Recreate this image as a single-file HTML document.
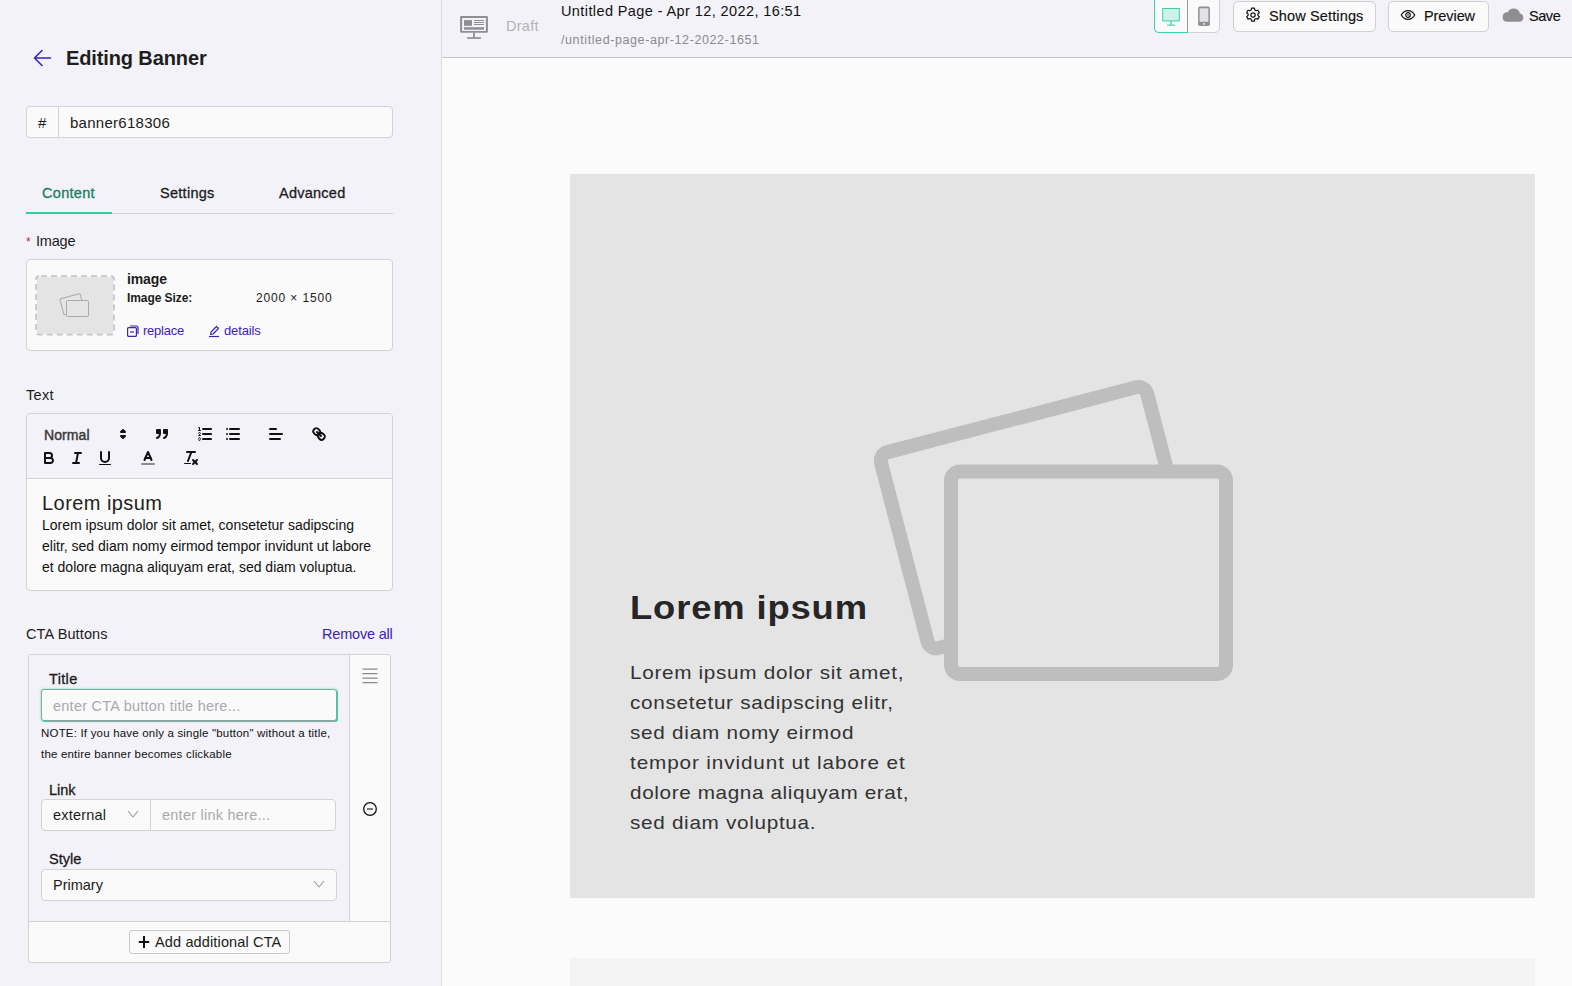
<!DOCTYPE html>
<html><head><meta charset="utf-8">
<style>
*{box-sizing:border-box;margin:0;padding:0}
html,body{width:1572px;height:986px;overflow:hidden;background:#fbfbfb;font-family:"Liberation Sans",sans-serif;color:#1c1c1c}
.a{position:absolute}
.t{position:absolute;white-space:nowrap;line-height:1}
#side{position:absolute;left:0;top:0;width:442px;height:986px;background:#f3f2f8;border-right:1px solid #dcdbe3}
#top{position:absolute;left:442px;top:0;width:1130px;height:58px;background:#f3f2f8;border-bottom:1px solid #c5c5ce}
.box{position:absolute;background:#fafafa;border:1px solid #d3d3d6;border-radius:4px}
.ql{position:absolute;width:18px;height:18px;overflow:visible}
.ql .s{fill:none;stroke:#111;stroke-width:2;stroke-linecap:round;stroke-linejoin:round}
.ql .f{fill:#111}
.m{-webkit-text-stroke:0.3px currentColor}
</style></head><body>

<div id="side">
  <!-- back arrow -->
  <svg class="a" style="left:32px;top:48px" width="20" height="20" viewBox="0 0 20 20">
    <path d="M18.5 10H3 M10 2.5L2.5 10L10 17.5" fill="none" stroke="#3d22b6" stroke-width="1.6" stroke-linecap="round" stroke-linejoin="round"/>
  </svg>
  <div class="t" style="left:66px;top:48px;font-size:20px;font-weight:bold;letter-spacing:-0.12px;color:#1e1e1e">Editing Banner</div>

  <!-- id input -->
  <div class="box" style="left:26px;top:106px;width:367px;height:32px"></div>
  <div class="a" style="left:58px;top:107px;width:1px;height:30px;background:#d3d3d6"></div>
  <div class="t" style="left:38px;top:115px;font-size:15px">#</div>
  <div class="t" style="left:70px;top:115px;font-size:15px;letter-spacing:0.27px">banner618306</div>

  <!-- tabs -->
  <div class="a" style="left:26px;top:213px;width:367px;height:1px;background:#cfcfd4"></div>
  <div class="a" style="left:26px;top:212px;width:86px;height:2px;background:#2ccf9e"></div>
  <div class="t m" style="left:42px;top:186px;font-size:14.5px;letter-spacing:0.3px;color:#1b7d62">Content</div>
  <div class="t m" style="left:160px;top:186px;font-size:14.5px;letter-spacing:0.28px">Settings</div>
  <div class="t m" style="left:279px;top:186px;font-size:14.5px;letter-spacing:0.25px">Advanced</div>

  <!-- image label -->
  <div class="t" style="left:26px;top:236px;font-size:12px;color:#d0233a">*</div>
  <div class="t" style="left:36px;top:234px;font-size:14.5px;letter-spacing:-0.2px">Image</div>

  <!-- image card -->
  <div class="box" style="left:26px;top:259px;width:367px;height:92px"></div>
  <svg class="a" style="left:34px;top:274px" width="82" height="63" viewBox="34 274 82 63"><rect x="36.9" y="277.1" width="76.2" height="56.8" fill="#e4e4e4"/><rect x="36" y="276.1" width="78" height="58.6" rx="3" fill="none" stroke="#c6c6cc" stroke-width="1.8" stroke-dasharray="6 4" stroke-dashoffset="-2"/></svg>
  <svg class="a" style="left:35px;top:275px" width="80" height="61" viewBox="35 275 80 61">
    <g fill="none" stroke="#ababab" stroke-width="1">
      <rect x="61.5" y="296" width="21" height="16.5" rx="1" transform="rotate(-15 72 304.2)"/>
      <rect x="66.5" y="300.5" width="22" height="16" rx="1" fill="#e4e4e4"/>
    </g>
  </svg>
  <div class="t" style="left:127px;top:272px;font-size:14px;font-weight:bold;letter-spacing:-0.12px">image</div>
  <div class="t" style="left:127px;top:292px;font-size:12px;font-weight:bold;letter-spacing:-0.07px">Image Size:</div>
  <div class="t" style="left:256px;top:292px;font-size:12px;letter-spacing:0.86px">2000 × 1500</div>
  <svg class="a" style="left:126px;top:324px" width="14" height="14" viewBox="0 0 14 14">
    <g fill="none" stroke="#3d22b6" stroke-width="1.2">
      <rect x="1.6" y="3.6" width="8.8" height="8.8" rx="1"/>
      <path d="M4 2h6.5A1.5 1.5 0 0 1 12 3.5V10"/>
      <path d="M4 8h4"/>
    </g>
  </svg>
  <div class="t" style="left:143px;top:324px;font-size:13px;letter-spacing:-0.23px;color:#3d22b6">replace</div>
  <svg class="a" style="left:207px;top:324px" width="14" height="14" viewBox="0 0 14 14">
    <g fill="none" stroke="#3d22b6" stroke-width="1.2" stroke-linejoin="round">
      <path d="M3.5 10.5L4 8L9.5 2.5L11.5 4.5L6 10Z"/>
      <path d="M2 12.5H12"/>
    </g>
  </svg>
  <div class="t" style="left:224px;top:324px;font-size:13px;letter-spacing:-0.12px;color:#3d22b6">details</div>

  <!-- Text label -->
  <div class="t" style="left:26px;top:388px;font-size:14.5px;letter-spacing:0.3px">Text</div>

  <!-- editor -->
  <div class="a" style="left:26px;top:413px;width:367px;height:178px;background:#fafafa;border:1px solid #d3d3d6;border-radius:4px;overflow:hidden">
    <div class="a" style="left:0;top:0;width:365px;height:65px;background:#f3f2f8;border-bottom:1px solid #d3d3d6"></div>
  </div>
  <div class="t m" style="left:44px;top:428px;font-size:14px;color:#3a3a3a;-webkit-text-stroke:0.45px #3a3a3a;letter-spacing:0.1px">Normal</div>
  <!-- picker arrows -->
  <svg class="ql" style="left:114px;top:425px" viewBox="0 0 18 18"><polygon class="s" style="fill:#111" points="7 11 9 13 11 11 7 11"/><polygon class="s" style="fill:#111" points="7 7 9 5 11 7 7 7"/></svg>
  <!-- blockquote -->
  <svg class="ql" style="left:153px;top:425px" viewBox="0 0 18 18"><rect class="s f" height="3" width="3" x="4" y="5"/><rect class="s f" height="3" width="3" x="11" y="5"/><path class="s" d="M7,8c0,4.031-3,5-3,5"/><path class="s" d="M14,8c0,4.031-3,5-3,5"/></svg>
  <!-- ordered list -->
  <svg class="ql" style="left:196px;top:425px" viewBox="0 0 18 18"><line class="s" x1="7" x2="15" y1="4" y2="4"/><line class="s" x1="7" x2="15" y1="9" y2="9"/><line class="s" x1="7" x2="15" y1="14" y2="14"/><line class="s" style="stroke-width:1" x1="2.5" x2="4.5" y1="5.5" y2="5.5"/><path class="f" d="M3.5,6A0.5,0.5,0,0,1,3,5.5V3.085l-0.276.138A0.5,0.5,0,0,1,2.053,3c-0.124-.247-0.023-0.324.224-0.447l1-.5A0.5,0.5,0,0,1,4,2.5v3A0.5,0.5,0,0,1,3.5,6Z"/><path class="s" style="stroke-width:1" d="M4.5,10.5h-2c0-.234,1.85-1.076,1.85-2.234A0.959,0.959,0,0,0,2.5,8.156"/><path class="s" style="stroke-width:1" d="M2.5,14.846a0.959,0.959,0,0,0,1.85-.109A0.7,0.7,0,0,0,3.75,14a0.688,0.688,0,0,0,.6-0.736,0.959,0.959,0,0,0-1.85-.109"/></svg>
  <!-- bullet list -->
  <svg class="ql" style="left:224px;top:425px" viewBox="0 0 18 18"><line class="s" x1="6" x2="15" y1="4" y2="4"/><line class="s" x1="6" x2="15" y1="9" y2="9"/><line class="s" x1="6" x2="15" y1="14" y2="14"/><line class="s" x1="3" x2="3" y1="4" y2="4"/><line class="s" x1="3" x2="3" y1="9" y2="9"/><line class="s" x1="3" x2="3" y1="14" y2="14"/></svg>
  <!-- align -->
  <svg class="ql" style="left:267px;top:425px" viewBox="0 0 18 18"><line class="s" x1="3" x2="15" y1="9" y2="9"/><line class="s" x1="3" x2="13" y1="14" y2="14"/><line class="s" x1="3" x2="9" y1="4" y2="4"/></svg>
  <!-- link -->
  <svg class="ql" style="left:310px;top:425px" viewBox="0 0 18 18"><line class="s" x1="7" x2="11" y1="7" y2="11"/><path class="s" d="M8.9,4.577a3.476,3.476,0,0,1,.36,4.679A3.476,3.476,0,0,1,4.577,8.9C3.185,7.5,2.035,6.4,4.217,4.217S7.5,3.185,8.9,4.577Z"/><path class="s" d="M13.423,9.1a3.476,3.476,0,0,0-4.679-.36,3.476,3.476,0,0,0,.36,4.679c1.392,1.392,2.5,2.542,4.679.36S14.815,10.5,13.423,9.1Z"/></svg>
  <!-- bold -->
  <svg class="ql" style="left:40px;top:449px" viewBox="0 0 18 18"><path class="s" d="M5,4H9.5A2.5,2.5,0,0,1,12,6.5v0A2.5,2.5,0,0,1,9.5,9H5A0,0,0,0,1,5,9V4A0,0,0,0,1,5,4Z"/><path class="s" d="M5,9h5.5A2.5,2.5,0,0,1,13,11.5v0A2.5,2.5,0,0,1,10.5,14H5a0,0,0,0,1,0,0V9A0,0,0,0,1,5,9Z"/></svg>
  <!-- italic -->
  <svg class="ql" style="left:68px;top:449px" viewBox="0 0 18 18"><line class="s" x1="7" x2="13" y1="4" y2="4"/><line class="s" x1="5" x2="11" y1="14" y2="14"/><line class="s" x1="8" x2="10" y1="14" y2="4"/></svg>
  <!-- underline -->
  <svg class="ql" style="left:96px;top:449px" viewBox="0 0 18 18"><path class="s" d="M5,3V9a4.012,4.012,0,0,0,4,4H9a4.012,4.012,0,0,0,4-4V3"/><rect class="f" height="1" rx="0.5" ry="0.5" width="12" x="3" y="15"/></svg>
  <!-- color -->
  <svg class="ql" style="left:139px;top:449px" viewBox="0 0 18 18"><line class="s" style="stroke:#8a8a8a" x1="3" x2="15" y1="15" y2="15"/><polyline class="s" points="5.5 11 9 3 12.5 11"/><line class="s" x1="11.63" x2="6.38" y1="9" y2="9"/></svg>
  <!-- clean -->
  <svg class="ql" style="left:182px;top:449px" viewBox="0 0 18 18"><line class="s" x1="5" x2="13" y1="3" y2="3"/><line class="s" x1="6" x2="9.35" y1="12" y2="3"/><line class="s" x1="11" x2="15" y1="11" y2="15"/><line class="s" x1="15" x2="11" y1="11" y2="15"/><rect class="f" width="7" height="1" rx="0.5" ry="0.5" x="2" y="14"/></svg>

  <div class="t" style="left:42px;top:493px;font-size:20px;letter-spacing:0.44px;color:#222">Lorem ipsum</div>
  <div class="a" style="left:42px;top:515px;font-size:14px;line-height:21px;color:#111;white-space:nowrap">Lorem ipsum dolor sit amet, consetetur sadipscing<br>elitr, sed diam nomy eirmod tempor invidunt ut labore<br>et dolore magna aliquyam erat, sed diam voluptua.</div>

  <!-- CTA -->
  <div class="t" style="left:26px;top:627px;font-size:14.5px;letter-spacing:0.12px">CTA Buttons</div>
  <div class="t" style="left:322px;top:627px;font-size:14.5px;letter-spacing:-0.19px;color:#3d22b6">Remove all</div>

  <div class="a" style="left:28px;top:654px;width:363px;height:309px;background:#fafafa;border:1px solid #d3d3d6;border-radius:3px;overflow:hidden">
    <div class="a" style="left:0;top:0;width:321px;height:267px;background:#f3f2f8;border-right:1px solid #d3d3d6;border-bottom:1px solid #d3d3d6"></div>
    <div class="a" style="left:321px;top:0;width:40px;height:267px;border-bottom:1px solid #d3d3d6"></div>
  </div>
  <div class="t m" style="left:49px;top:672px;font-size:14.5px;letter-spacing:0.34px">Title</div>
  <div class="a" style="left:41px;top:689px;width:296px;height:32px;background:#fafafa;border:1px solid #86a89e;border-radius:3px;box-shadow:1px 1px 0 0 #2ed7a9,0 0 1.5px 1px rgba(60,220,180,0.35)"></div>
  <div class="t" style="left:53px;top:699px;font-size:14.5px;letter-spacing:0.24px;color:#a9a9ad">enter CTA button title here...</div>
  <div class="a" style="left:41px;top:723px;font-size:11.5px;line-height:20.75px;letter-spacing:0.19px;color:#111;white-space:nowrap">NOTE: If you have only a single "button" without a title,<br>the entire banner becomes clickable</div>

  <!-- hamburger -->
  <svg class="a" style="left:360px;top:665px" width="20" height="22" viewBox="0 0 20 22"><g stroke="#8a8a8e" stroke-width="1.2"><path d="M2.5 4.2H17.5M2.5 8.7H17.5M2.5 13.2H17.5M2.5 17.7H17.5"/></g></svg>
  <!-- minus circle -->
  <svg class="a" style="left:360px;top:799px" width="20" height="20" viewBox="0 0 20 20"><circle cx="10" cy="10" r="6.3" fill="none" stroke="#111" stroke-width="1.3"/><path d="M7 10H13" stroke="#555" stroke-width="1.5"/></svg>

  <div class="t m" style="left:49px;top:783px;font-size:14.5px">Link</div>
  <div class="box" style="left:41px;top:799px;width:295px;height:32px"></div>
  <div class="a" style="left:150px;top:800px;width:1px;height:30px;background:#d3d3d6"></div>
  <div class="t" style="left:53px;top:808px;font-size:14.5px;letter-spacing:0.2px">external</div>
  <svg class="a" style="left:126px;top:808px" width="14" height="12" viewBox="0 0 14 12"><path d="M2 3L7 9L12 3" fill="none" stroke="#9a9a9e" stroke-width="1.1"/></svg>
  <div class="t" style="left:162px;top:808px;font-size:14.5px;letter-spacing:0.24px;color:#a9a9ad">enter link here...</div>

  <div class="t m" style="left:49px;top:852px;font-size:14.5px">Style</div>
  <div class="box" style="left:41px;top:869px;width:296px;height:32px"></div>
  <div class="t" style="left:53px;top:878px;font-size:14.5px">Primary</div>
  <svg class="a" style="left:312px;top:878px" width="14" height="12" viewBox="0 0 14 12"><path d="M2 3L7 9L12 3" fill="none" stroke="#9a9a9e" stroke-width="1.1"/></svg>

  <!-- add CTA button -->
  <div class="box" style="left:129px;top:930px;width:161px;height:24px;border-radius:3px;border-color:#c9c9cd"></div>
  <svg class="a" style="left:137px;top:934px" width="14" height="16" viewBox="0 0 14 16"><path d="M7 2V14M1.8 8H12.2" stroke="#111" stroke-width="2"/></svg>
  <div class="t" style="left:155px;top:935px;font-size:14.5px;letter-spacing:0.14px">Add additional CTA</div>
</div>

<div id="top"></div>
<!-- page monitor icon -->
<svg class="a" style="left:459px;top:15px" width="30" height="25" viewBox="459 15 30 25">
  <g fill="#8e8e93">
    <path fill-rule="evenodd" d="M461.1 16H486.9A1 1 0 0 1 487.9 17V31.7A1 1 0 0 1 486.9 32.7H461.1A1 1 0 0 1 460.1 31.7V17A1 1 0 0 1 461.1 16ZM462.1 17.9V31.1H485.9V17.9Z"/>
    <rect x="464" y="20.1" width="8" height="5.7"/>
    <rect x="474" y="20" width="10" height="1"/>
    <rect x="474" y="22" width="10" height="1"/>
    <rect x="474" y="24" width="10" height="1"/>
    <rect x="464" y="27.2" width="20" height="2.5"/>
    <rect x="473.1" y="32.5" width="1.8" height="5"/>
    <rect x="467.1" y="37.2" width="13.8" height="1.7"/>
  </g>
</svg>
<div class="t" style="left:506px;top:19px;font-size:14.5px;letter-spacing:0.27px;color:#b3b3b7">Draft</div>
<div class="t" style="left:561px;top:4px;font-size:14.5px;letter-spacing:0.4px;color:#111">Untitled Page - Apr 12, 2022, 16:51</div>
<div class="t" style="left:561px;top:34px;font-size:12.5px;letter-spacing:0.6px;color:#8a8a8e">/untitled-page-apr-12-2022-1651</div>

<!-- device toggle -->
<div class="a" style="left:1154px;top:-5px;width:66px;height:38px;background:#fafafa;border:1px solid #cfcfd4;border-radius:5px"></div>
<div class="a" style="left:1154px;top:-5px;width:34px;height:38px;border:1px solid #3ad0aa;border-right:none;border-radius:5px 0 0 5px"></div>
<div class="a" style="left:1187px;top:0;width:1px;height:32px;background:#9a9a9e"></div>
<svg class="a" style="left:1160px;top:6px" width="22" height="22" viewBox="1160 6 22 22">
  <rect x="1162.7" y="8.5" width="16.6" height="12.4" fill="#cdf2e6" stroke="#3ad0aa" stroke-width="1"/>
  <rect x="1170.4" y="21" width="1.2" height="3.8" fill="#3ad0aa"/>
  <rect x="1167.2" y="24.6" width="8" height="1.1" fill="#3ad0aa"/>
</svg>
<svg class="a" style="left:1196px;top:5px" width="16" height="23" viewBox="1196 5 16 23">
  <rect x="1198.1" y="6.5" width="11.8" height="19.5" rx="1.8" fill="#8e8e93"/>
  <rect x="1199.6" y="8.3" width="8.8" height="13.5" fill="#e3e3e7"/>
  <circle cx="1204" cy="23.9" r="0.9" fill="#fafafa"/>
</svg>

<!-- show settings -->
<div class="a" style="left:1233px;top:1px;width:143px;height:31px;background:#fafafa;border:1px solid #cfcfd4;border-radius:5px"></div>
<svg class="a" style="left:1244px;top:6px" width="18" height="18" viewBox="0 0 18 18">
  <path fill="none" stroke="#111" stroke-width="1.2" stroke-linejoin="round" d="M7.6 2.2h2.8l.45 1.9 1.2.7 1.85-.6 1.4 2.4-1.4 1.35v1.4l1.4 1.35-1.4 2.4-1.85-.6-1.2.7-.45 1.9H7.6l-.45-1.9-1.2-.7-1.85.6-1.4-2.4 1.4-1.35v-1.4L2.7 6.6l1.4-2.4 1.85.6 1.2-.7z"/>
  <circle cx="9" cy="9" r="2.2" fill="none" stroke="#111" stroke-width="1.2"/>
</svg>
<div class="t m" style="-webkit-text-stroke:0.15px #111;left:1269px;top:9px;font-size:14.5px;letter-spacing:0.14px;color:#111">Show Settings</div>

<!-- preview btn -->
<div class="a" style="left:1388px;top:1px;width:101px;height:31px;background:#fafafa;border:1px solid #cfcfd4;border-radius:5px"></div>
<svg class="a" style="left:1400px;top:7px" width="16" height="16" viewBox="0 0 16 16">
  <path fill="none" stroke="#111" stroke-width="1.2" d="M1.3 8C2.8 5.2 5.2 3.6 8 3.6S13.2 5.2 14.7 8C13.2 10.8 10.8 12.4 8 12.4S2.8 10.8 1.3 8Z"/>
  <circle cx="8" cy="8" r="2.3" fill="none" stroke="#111" stroke-width="1.2"/>
  <circle cx="8" cy="8" r="0.8" fill="#111"/>
</svg>
<div class="t m" style="-webkit-text-stroke:0.15px #111;left:1424px;top:9px;font-size:14.5px;letter-spacing:-0.08px;color:#111">Preview</div>

<!-- save -->
<svg class="a" style="left:1500px;top:6px" width="26" height="18" viewBox="0 0 26 18">
  <path fill="#8e8e93" d="M6.5 15.8H19.3A4.2 4.2 0 0 0 20 7.5 A6.5 6.5 0 0 0 7.7 6.3 A4.8 4.8 0 0 0 6.5 15.8Z"/>
</svg>
<div class="t m" style="-webkit-text-stroke:0.15px #111;left:1529px;top:9px;font-size:14.5px;letter-spacing:-0.45px;color:#111">Save</div>

<!-- preview -->
<div class="a" style="left:570px;top:174px;width:965px;height:724px;background:#e4e4e4"></div>
<svg class="a" style="left:570px;top:174px" width="965" height="724" viewBox="570 174 965 724">
  <g fill="none" stroke="#bebebe" stroke-width="14" stroke-linejoin="round">
    <rect x="899.9" y="416.45" width="275" height="202.5" rx="9" transform="rotate(-14.6 1037.4 517.7)"/>
    <rect x="951" y="471.5" width="275" height="202.5" rx="9" fill="#e4e4e4"/>
  </g>
</svg>
<div class="t" style="left:630px;top:592px;font-size:32.5px;font-weight:bold;letter-spacing:0.76px;color:#262626;transform:scaleX(1.12);transform-origin:0 0">Lorem ipsum</div>
<div class="a" style="left:630px;top:658px;font-size:18.5px;line-height:30px;letter-spacing:0.55px;color:#333;white-space:nowrap;transform:scaleX(1.12);transform-origin:0 0"><span style="letter-spacing:0.61px">Lorem ipsum dolor sit amet,</span><br><span style="letter-spacing:0.62px">consetetur sadipscing elitr,</span><br><span style="letter-spacing:0.65px">sed diam nomy eirmod</span><br><span style="letter-spacing:0.78px">tempor invidunt ut labore et</span><br><span style="letter-spacing:0.55px">dolore magna aliquyam erat,</span><br><span style="letter-spacing:0.61px">sed diam voluptua.</span></div>
<div class="a" style="left:570px;top:958px;width:965px;height:28px;background:#f4f4f4"></div>

</body></html>
